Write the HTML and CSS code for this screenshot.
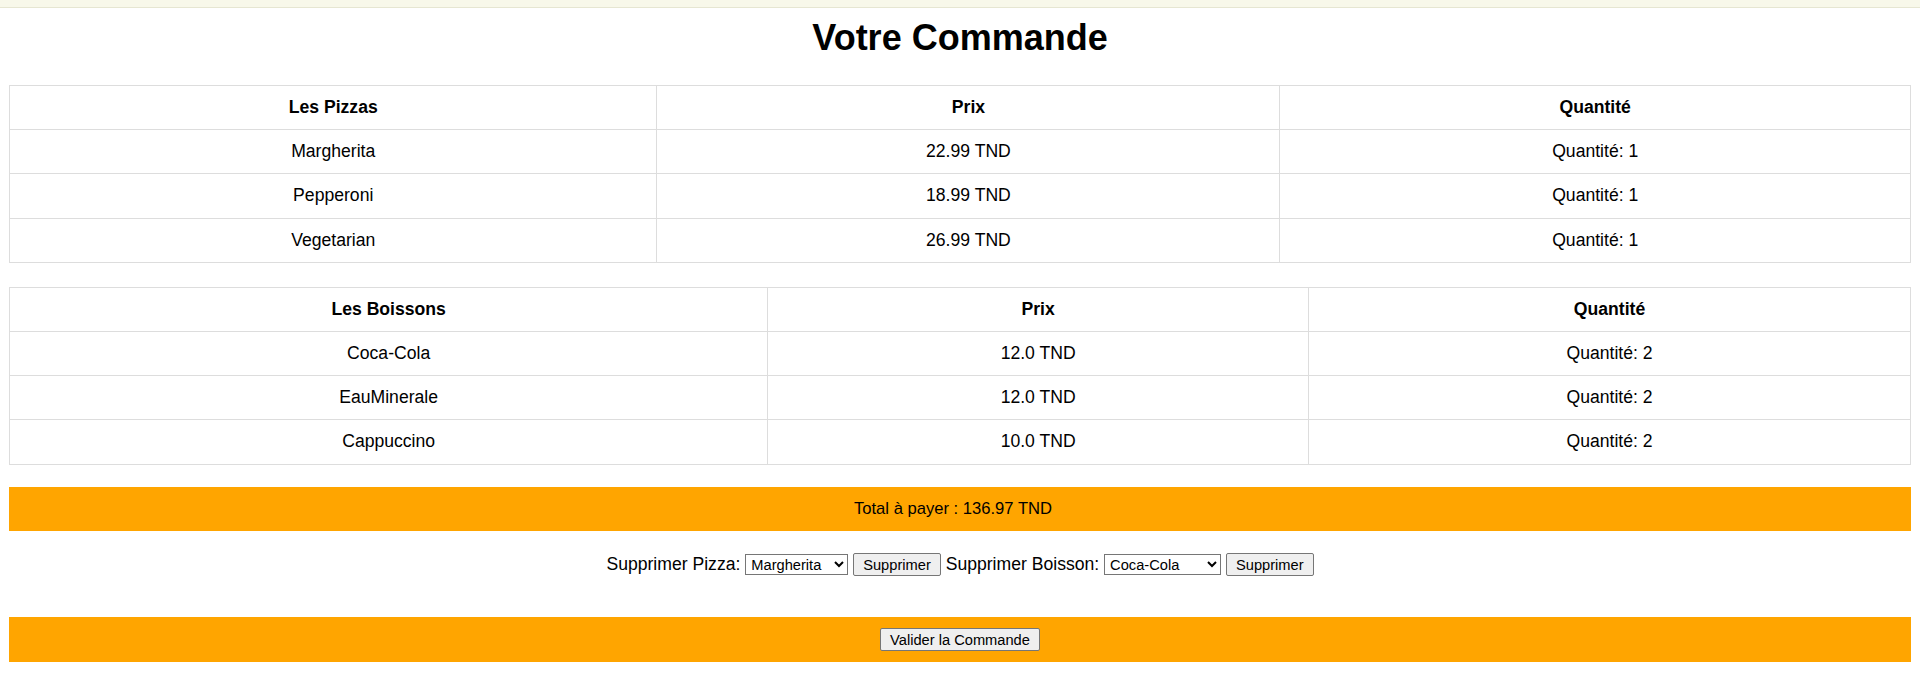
FILE: index.html
```html
<!DOCTYPE html>
<html lang="fr">
<head>
<meta charset="utf-8">
<title>Votre Commande</title>
<link rel="stylesheet" href="styles.css">
</head>
<body>
<div class="topbar"></div>
<main class="page">
  <h1 class="title">Votre Commande</h1>

  <table class="order-table pizzas">
    <thead>
      <tr><th>Les Pizzas</th><th>Prix</th><th>Quantité</th></tr>
    </thead>
    <tbody>
      <tr><td>Margherita</td><td>22.99 TND</td><td>Quantité: 1</td></tr>
      <tr><td>Pepperoni</td><td>18.99 TND</td><td>Quantité: 1</td></tr>
      <tr><td>Vegetarian</td><td>26.99 TND</td><td>Quantité: 1</td></tr>
    </tbody>
  </table>

  <table class="order-table boissons">
    <thead>
      <tr><th>Les Boissons</th><th>Prix</th><th>Quantité</th></tr>
    </thead>
    <tbody>
      <tr><td>Coca-Cola</td><td>12.0 TND</td><td>Quantité: 2</td></tr>
      <tr><td>EauMinerale</td><td>12.0 TND</td><td>Quantité: 2</td></tr>
      <tr><td>Cappuccino</td><td>10.0 TND</td><td>Quantité: 2</td></tr>
    </tbody>
  </table>

  <div class="total">Total à payer : 136.97 TND</div>

  <form class="controls">
    <label>Supprimer Pizza:</label>
    <select class="sel sel-pizza">
      <option>Margherita</option>
      <option>Pepperoni</option>
      <option>Vegetarian</option>
    </select>
    <button type="button" class="btn">Supprimer</button>
    <label>Supprimer Boisson:</label>
    <select class="sel sel-boisson">
      <option>Coca-Cola</option>
      <option>EauMinerale</option>
      <option>Cappuccino</option>
    </select>
    <button type="button" class="btn">Supprimer</button>
  </form>

  <div class="validate">
    <button type="button" class="btn">Valider la Commande</button>
  </div>
</main>
</body>
</html>
```

FILE: styles.css
```css
html, body {
  margin: 0;
  padding: 0;
  background: #ffffff;
}

body {
  font-family: "Liberation Sans", Arial, sans-serif;
  font-size: 17.6px;
  color: #000;
}

.topbar {
  height: 7px;
  background: #f8f8ea;
  border-bottom: 1px solid #e6e6d2;
}

.page {
  padding: 0 9px;
}

.title {
  margin: 9px 0 26px;
  font-size: 36px;
  font-weight: bold;
  text-align: center;
  line-height: normal;
}

.order-table {
  width: 100%;
  border-collapse: collapse;
  margin: 0 0 24px;
}

.order-table.boissons {
  margin-bottom: 22px;
}

.order-table th,
.order-table td {
  border: 1px solid #dddddd;
  padding: 11px;
  line-height: 21.2px;
  text-align: center;
  font-size: 17.6px;
}

.order-table th {
  font-weight: bold;
}

.total {
  background: #ffa500;
  text-align: center;
  padding: 10px 24px 10px 10px;
  font-size: 16.6px;
  line-height: 24px;
}

.controls {
  margin: 21px 0 0;
  height: 65px;
  text-align: center;
  font-size: 17.6px;
  line-height: 24px;
}

.sel,
.btn {
  font-family: "Liberation Sans", Arial, sans-serif;
  font-size: 14.67px;
  color: #000;
}

.sel {
  height: 21px;
  border: 1px solid #767676;
  border-radius: 0;
  background: #fff;
  padding: 0 0 0 1px;
}

.sel-pizza { width: 103px; }
.sel-boisson { width: 117px; }

.btn {
  background: #efefef;
  border: 1px solid #767676;
  border-radius: 2px;
  padding: 1px 9px;
  height: 23px;
}

.validate {
  background: #ffa500;
  text-align: center;
  padding: 11px 0 11px;
  line-height: 23px;
}
```
